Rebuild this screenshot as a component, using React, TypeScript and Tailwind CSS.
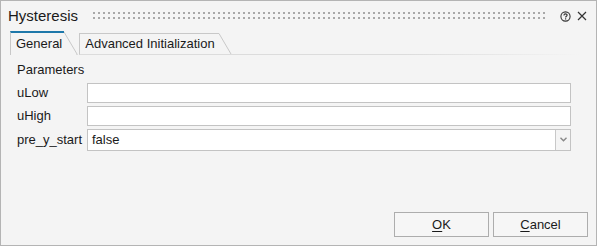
import React from 'react';

const FONT = { fontFamily: '"Liberation Sans", Arial, sans-serif' };

function Grip() {
  return (
    <svg className="flex-1 h-[10px]" preserveAspectRatio="none">
      <defs>
        <pattern id="grip" width="5" height="5" patternUnits="userSpaceOnUse">
          <rect x="0" y="1" width="2" height="2" fill="#a8a8a8" />
        </pattern>
      </defs>
      <rect x="0" y="0" width="100%" height="10" fill="url(#grip)" />
    </svg>
  );
}

function Field({ label, children, className = '' }: { label: string; children: React.ReactNode; className?: string }) {
  return (
    <div className={`flex items-center h-[23px] ${className}`}>
      <span className="w-[70px] text-[13px] text-[#1a1a1a]">{label}</span>
      {children}
    </div>
  );
}

export default function App() {
  return (
    <div style={FONT} className="w-[597px] h-[246px] border border-[#b4b4b4] bg-[#f4f4f4] flex flex-col">
      {/* title bar */}
      <div className="h-[30px] flex items-center pl-[7px] pr-[9px]">
        <span className="text-[15px] text-[#1a1a1a] mr-[15px]">Hysteresis</span>
        <Grip />
        <div className="flex items-center gap-[6px] ml-[14px]">
          <svg width="11" height="11" viewBox="0 0 11 11">
            <circle cx="5.5" cy="5.5" r="4.6" fill="none" stroke="#333" strokeWidth="1.1" />
            <path d="M3.9 4.4 C3.9 3.3 4.6 2.9 5.5 2.9 C6.4 2.9 7.1 3.4 7.1 4.2 C7.1 5.2 5.6 5.3 5.6 6.5" fill="none" stroke="#333" strokeWidth="1.1" />
            <rect x="5" y="7.3" width="1.2" height="1.2" fill="#333" />
          </svg>
          <svg width="10" height="10" viewBox="0 0 10 10">
            <path d="M1 1 L9 9 M9 1 L1 9" stroke="#333" strokeWidth="1.2" />
          </svg>
        </div>
      </div>

      {/* tabs */}
      <div className="h-[24px] flex items-end pl-[9px]">
        <div className="relative h-[24px] flex">
          <div className="h-[24px] pl-[5px] pr-[2px] border-l border-[#c8c8c8] border-t-2 border-t-[#1e78aa] text-[13px] text-[#1a1a1a] flex items-center">
            General
          </div>
          <svg width="14" height="24" className="block">
            <path d="M0 1 L13 23" stroke="#c8c8c8" strokeWidth="1" fill="none" />
            <path d="M12 23.5 L14 23.5" stroke="#dcdcdc" />
          </svg>
        </div>
        <div className="relative h-[24px] flex ml-[1px]">
          <div className="h-[22px] mt-[2px] pl-[5px] pr-[4px] border-l border-t border-[#c8c8c8] border-b border-b-[#dcdcdc] text-[13px] text-[#1a1a1a] flex items-center">
            Advanced Initialization
          </div>
          <svg width="13" height="24" className="block">
            <path d="M0 2.5 L12 23" stroke="#c8c8c8" strokeWidth="1" fill="none" />
            <path d="M0 23.5 L13 23.5" stroke="#dcdcdc" />
          </svg>
        </div>
        <div className="flex-1 h-px mr-[16px] bg-gradient-to-r from-[#dcdcdc] via-[#dcdcdc] to-[#f4f4f4]" />
      </div>

      {/* content */}
      <div className="flex-1 flex flex-col pl-[16px] pr-[25px] pt-[4px]">
        <div className="text-[13px] text-[#1a1a1a] h-[22px] flex items-center">Parameters</div>
        <Field label="uLow">
          <div className="flex-1 h-[20px] bg-white border border-[#c3c3c3]" />
        </Field>
        <Field label="uHigh">
          <div className="flex-1 h-[20px] bg-white border border-[#c3c3c3]" />
        </Field>
        <Field label="pre_y_start" className="mt-[1px]">
          <div className="flex-1 h-[22px] bg-white border border-[#c3c3c3] flex items-center">
            <span className="flex-1 pl-[4px] text-[13px] text-[#1a1a1a]">false</span>
            <div className="w-[15px] h-full border-l border-[#c8c8c8] bg-[#f4f4f4] flex items-center justify-center">
              <svg width="7" height="5" viewBox="0 0 7 5">
                <path d="M0.5 0.8 L3.5 3.8 L6.5 0.8" stroke="#888" strokeWidth="1.4" fill="none" />
              </svg>
            </div>
          </div>
        </Field>
        <div className="flex-1" />
        <div className="flex justify-end gap-[4px] mr-[-17px] mb-[8px]">
          <button className="w-[95px] h-[25px] border border-[#adadad] bg-[#f6f6f6] text-[13px] text-[#1a1a1a]">
            <span className="underline underline-offset-2">O</span>K
          </button>
          <button className="w-[95px] h-[25px] border border-[#adadad] bg-[#f6f6f6] text-[13px] text-[#1a1a1a]">
            <span className="underline underline-offset-2">C</span>ancel
          </button>
        </div>
      </div>
    </div>
  );
}
